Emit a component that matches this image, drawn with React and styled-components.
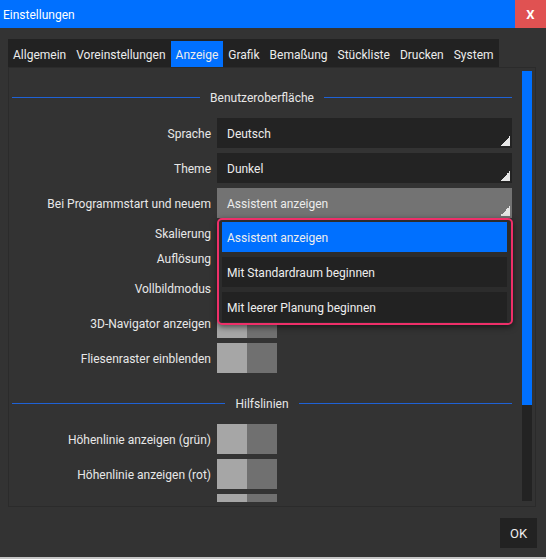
import React from 'react'
import styled, { createGlobalStyle } from 'styled-components'

const GlobalStyle = createGlobalStyle`
  html, body {
    margin: 0;
    padding: 0;
    background: #333333;
  }
  body {
    font-family: Roboto, "Noto Sans", sans-serif;
    font-size: 12px;
    color: #e8e8e8;
  }
  * { box-sizing: border-box; }
`

const tabs = ['Allgemein', 'Voreinstellungen', 'Anzeige', 'Grafik', 'Bemaßung', 'Stückliste', 'Drucken', 'System']
const startOptions = ['Assistent anzeigen', 'Mit Standardraum beginnen', 'Mit leerer Planung beginnen']

const App = () => {
  return (
    <Window>
      <GlobalStyle />
      <TitleBar>
        <Title>Einstellungen</Title>
        <CloseButton>X</CloseButton>
      </TitleBar>
      <Body>
        <TabBar>
          {tabs.map(t => (
            <Tab key={t} $active={t === 'Anzeige'}>{t}</Tab>
          ))}
        </TabBar>
        <Panel>
          <ScrollArea>
            <Form>
              <SectionHeader>
                <Line />
                <SectionTitle>Benutzeroberfläche</SectionTitle>
                <Line />
              </SectionHeader>
              <Row>
                <Label>Sprache</Label>
                <Select>Deutsch</Select>
              </Row>
              <Row>
                <Label>Theme</Label>
                <Select>Dunkel</Select>
              </Row>
              <Row>
                <Label>Bei Programmstart und neuem</Label>
                <Select $open>
                  Assistent anzeigen
                  <Popup>
                    {startOptions.map((o, i) => (
                      <Option key={o} $selected={i === 0}>{o}</Option>
                    ))}
                  </Popup>
                </Select>
              </Row>
              <Row $h={21}>
                <Label>Skalierung</Label>
                <Slider />
              </Row>
              <Row $h={19}>
                <Label>Auflösung</Label>
                <Slider />
              </Row>
              <Row>
                <Label>Vollbildmodus</Label>
                <Toggle />
              </Row>
              <Row>
                <Label>3D-Navigator anzeigen</Label>
                <Toggle />
              </Row>
              <Row>
                <Label>Fliesenraster einblenden</Label>
                <Toggle />
              </Row>
              <SectionHeader $second>
                <Line />
                <SectionTitle>Hilfslinien</SectionTitle>
                <Line />
              </SectionHeader>
              <Row>
                <Label>Höhenlinie anzeigen (grün)</Label>
                <Toggle />
              </Row>
              <Row>
                <Label>Höhenlinie anzeigen (rot)</Label>
                <Toggle />
              </Row>
              <Row>
                <Label />
                <Toggle />
              </Row>
            </Form>
          </ScrollArea>
          <ScrollTrack>
            <ScrollThumb />
          </ScrollTrack>
        </Panel>
        <Footer>
          <OkButton>OK</OkButton>
        </Footer>
      </Body>
    </Window>
  )
}

const Window = styled.div`
  width: 546px;
  height: 559px;
  display: flex;
  flex-direction: column;
  background: #333333;
  border-bottom: 2px solid #c6c6c6;
  overflow: hidden;
`

const TitleBar = styled.div`
  height: 28px;
  flex: none;
  display: flex;
  align-items: center;
  justify-content: space-between;
  background: #0070ff;
`

const Title = styled.div`
  padding: 1px 0 0 3px;
  color: #ffffff;
  font-size: 12px;
`

const CloseButton = styled.div`
  width: 31px;
  height: 28px;
  display: flex;
  align-items: center;
  justify-content: center;
  background: #e05252;
  color: #ffffff;
  font-weight: bold;
  font-size: 13px;
`

const Body = styled.div`
  flex: 1;
  display: flex;
  flex-direction: column;
  padding: 11px 10px 0 8px;
`

const TabBar = styled.div`
  align-self: flex-start;
  height: 28px;
  display: flex;
  align-items: flex-end;
  background: #222222;
`

const Tab = styled.div`
  height: 26px;
  padding: 1px 5px 0;
  display: flex;
  align-items: center;
  color: #ececec;
  background: ${p => (p.$active ? '#0070ff' : 'transparent')};
`

const Panel = styled.div`
  height: 440px;
  flex: none;
  display: flex;
  border: 1px solid #2b2b2b;
`

const ScrollArea = styled.div`
  flex: 1;
  overflow: hidden;
  padding: 19px 10px 0 3px;
  margin-bottom: 4px;
`

const Form = styled.div`
  display: flex;
  flex-direction: column;
  gap: 5px;
`

const SectionHeader = styled.div`
  height: 20px;
  display: flex;
  align-items: center;
  margin-top: ${p => (p.$second ? '15px' : '0')};
  margin-bottom: 6px;
`

const Line = styled.div`
  flex: 1;
  height: 1px;
  background: #1f62d6;
`

const SectionTitle = styled.div`
  padding: 1px 10px 0;
  color: #e8e8e8;
`

const Row = styled.div`
  height: ${p => p.$h || 30}px;
  display: grid;
  grid-template-columns: 199px 1fr;
  column-gap: 6px;
  align-items: center;
`

const Label = styled.div`
  padding-top: 1px;
  text-align: right;
  color: #e8e8e8;
  white-space: nowrap;
`

const Select = styled.div`
  position: relative;
  height: 30px;
  display: flex;
  align-items: center;
  padding: 1px 0 0 10px;
  background: ${p => (p.$open ? '#737373' : '#232323')};
  color: #ececec;

  &::after {
    content: '';
    position: absolute;
    right: 2px;
    bottom: 2px;
    width: 10px;
    height: 10px;
    background: linear-gradient(to bottom right, transparent 50%, #e6e6e6 50%);
  }
`

const Popup = styled.div`
  position: absolute;
  top: 100%;
  left: 0;
  z-index: 2;
  width: 296px;
  display: flex;
  flex-direction: column;
  gap: 5px;
  padding: 2px 4px 1px 3px;
  background: #2c2c2c;
  border: 2px solid #ee2f69;
  border-radius: 5px;
  box-shadow: 0 2px 6px rgba(0, 0, 0, 0.55);
`

const Option = styled.div`
  height: 30px;
  display: flex;
  align-items: center;
  padding: 1px 0 0 5px;
  background: ${p => (p.$selected ? '#0070ff' : '#222222')};
  color: #eeeeee;
`

const Slider = styled.div`
  height: 6px;
  width: 200px;
  background: #222222;
`

const Toggle = styled.div`
  width: 60px;
  height: 30px;
  background: linear-gradient(to right, #a6a6a6 50%, #707070 50%);
`

const ScrollTrack = styled.div`
  width: 10px;
  margin: 3px 3px 5px 0;
  background: #232323;
`

const ScrollThumb = styled.div`
  height: 334px;
  background: #0070ff;
`

const Footer = styled.div`
  display: flex;
  justify-content: flex-end;
  padding: 11px 0 0 0;
  margin-right: -1px;
`

const OkButton = styled.div`
  width: 37px;
  height: 30px;
  display: flex;
  align-items: center;
  justify-content: center;
  padding-top: 1px;
  background: #222222;
  color: #eeeeee;
  font-size: 13px;
`

export default App
